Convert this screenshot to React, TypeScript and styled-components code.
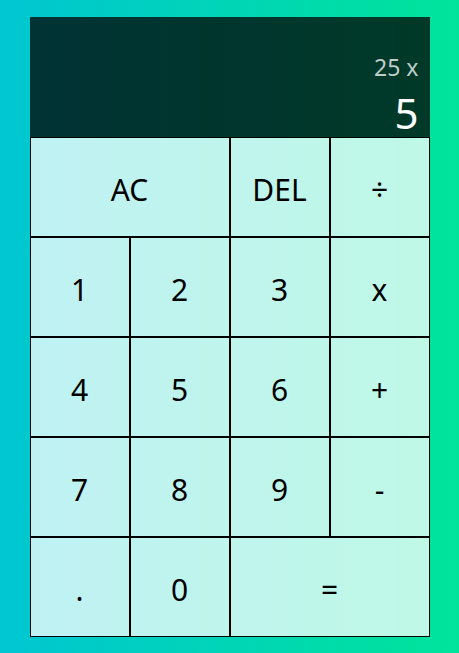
import React from "react";
import styled, { createGlobalStyle } from "styled-components";

const GlobalStyle = createGlobalStyle`
  *, *::before, *::after {
    box-sizing: border-box;
    font-family: "Noto Sans", "Open Sans", sans-serif;
    font-weight: normal;
  }
  body {
    margin: 0;
    padding: 0;
    background: linear-gradient(to right, #00c6d2, #00e49a);
  }
`;

const Grid = styled.div`
  display: grid;
  justify-content: center;
  align-content: center;
  min-height: 653px;
  grid-template-columns: repeat(4, 100px);
  grid-template-rows: minmax(120px, auto) repeat(5, 100px);
`;

const Output = styled.div`
  grid-column: 1 / -1;
  background-color: rgba(0, 0, 0, 0.75);
  display: flex;
  flex-direction: column;
  align-items: flex-end;
  justify-content: flex-end;
  padding: 0 11px 0;
  word-wrap: break-word;
  word-break: break-all;
`;

const Previous = styled.div`
  color: rgba(255, 255, 255, 0.75);
  font-size: 23px;
  line-height: 1.2;
  margin-bottom: 9px;
`;

const Current = styled.div`
  color: white;
  font-size: 42px;
  line-height: 1.1;
`;

const Key = styled.button<{ $wide?: boolean }>`
  cursor: pointer;
  font-size: 30px;
  border: 1px solid black;
  outline: none;
  color: #000;
  background-color: rgba(255, 255, 255, 0.75);
  grid-column: ${(p) => (p.$wide ? "span 2" : "auto")};
  padding: 5px 0 0;

  &:hover {
    background-color: rgba(255, 255, 255, 0.9);
  }
`;

const keys: { label: string; wide?: boolean }[] = [
  { label: "AC", wide: true },
  { label: "DEL" },
  { label: "÷" },
  { label: "1" },
  { label: "2" },
  { label: "3" },
  { label: "x" },
  { label: "4" },
  { label: "5" },
  { label: "6" },
  { label: "+" },
  { label: "7" },
  { label: "8" },
  { label: "9" },
  { label: "-" },
  { label: "." },
  { label: "0" },
  { label: "=", wide: true },
];

export default function App() {
  return (
    <>
      <GlobalStyle />
      <Grid>
        <Output>
          <Previous>25 x</Previous>
          <Current>5</Current>
        </Output>
        {keys.map((k) => (
          <Key key={k.label} $wide={k.wide}>
            {k.label}
          </Key>
        ))}
      </Grid>
    </>
  );
}
